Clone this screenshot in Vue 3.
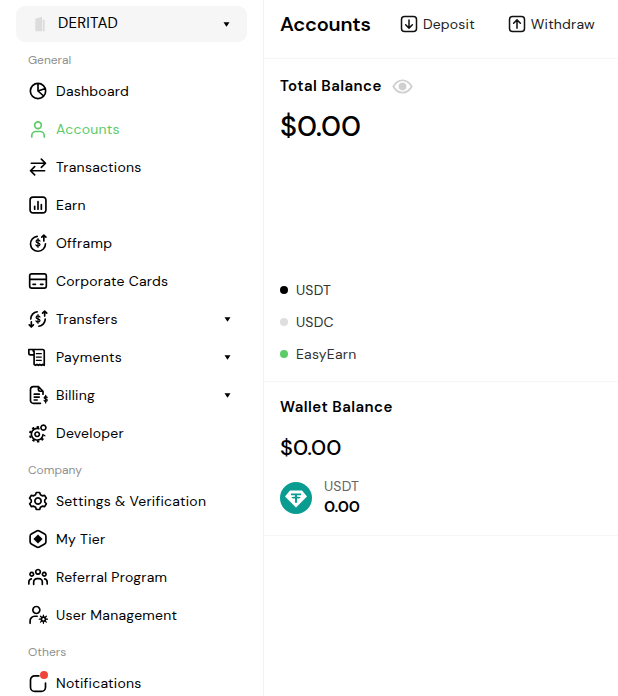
<script setup>
const down = { d: 'M4 6h16l-8 12z' }
const dollar = 'M14.300 9.700c-.4-.9-1.200-1.400-2.300-1.400-1.300 0-2.300.7-2.300 1.800 0 2.400 4.700 1.300 4.700 3.800 0 1.100-1 1.800-2.400 1.800-1.100 0-2-.5-2.400-1.400M12 6.800v10.400'
const general = [
  { label: 'Dashboard', icon: [{ d: 'M12 2.800a9.200 9.200 0 1 0 9.200 9.200A9.200 9.200 0 0 0 12 2.800zM12 2.800V12l6.800 6M12 12l8.800-3' }] },
  { label: 'Accounts', active: true, icon: [{ d: 'M12 3.500a4 4 0 1 0 0 8 4 4 0 0 0 0-8zM4.500 21.500v-1.500a5 5 0 0 1 5-5h5a5 5 0 0 1 5 5v1.500' }] },
  { label: 'Transactions', icon: [{ d: 'M21 7.500H4M16 2.500l5 5-5 5M3 16.500h17M8 11.500l-5 5 5 5' }] },
  { label: 'Earn', icon: [{ d: 'M6 2.500h12a3.500 3.500 0 0 1 3.500 3.500v12a3.500 3.500 0 0 1-3.500 3.500H6A3.500 3.500 0 0 1 2.500 18V6A3.500 3.500 0 0 1 6 2.500zM8 17v-3.500M12 17V8M16 17v-5.500' }] },
  { label: 'Offramp', icon: [{ d: 'M21 13a9 9 0 1 1-10-9M19 9.500V2.500M16.500 5L19 2.500 21.500 5' }, { d: dollar, thin: true }] },
  { label: 'Corporate Cards', icon: [{ d: 'M4.500 3.500h15A2.500 2.500 0 0 1 22 6v12a2.500 2.500 0 0 1-2.500 2.500h-15A2.500 2.500 0 0 1 2 18V6a2.500 2.500 0 0 1 2.500-2.500zM2 10h20M6 16h3M15 16h3' }] },
  { label: 'Transfers', caret: true, icon: [{ d: 'M11 3.300A8.800 8.800 0 0 0 3.300 12M13 20.700A8.800 8.800 0 0 0 20.700 12M20 8.500V2.500M17.500 5L20 2.500 22.500 5M4 15.500v6M1.500 19L4 21.500 6.500 19' }, { d: dollar, thin: true }] },
  { label: 'Payments', caret: true, icon: [{ d: 'M1 3h16.500a2 2 0 0 1 2 2v17l-1.800-1.200-1.700 1.200-1.800-1.200-1.700 1.200-1.700-1.200-1.800 1.200-1.700-1.200V5M1 3v4.500a2 2 0 0 0 2 2h3.500M6.500 5a2 2 0 0 0-2-2' }, { d: 'M10 8h6M10 12h6M10 16h6', thin: true }] },
  { label: 'Billing', caret: true, icon: [{ d: 'M18 11V7.500L12.500 2H6.500a3.500 3.500 0 0 0-3.500 3.500v13A3.500 3.500 0 0 0 6.500 22H15M12.500 2v3.500a2 2 0 0 0 2 2H18M7.500 11h6M7.500 14.500h6M7.500 18h3.500' }, { d: 'M23 15c-.3-.8-1-1.200-1.800-1.200-1 0-1.800.6-1.800 1.400 0 1.900 3.700 1 3.700 3 0 .9-.8 1.400-1.900 1.400-.8 0-1.500-.4-1.800-1.100M21.200 12.300v9.200', thin: true }] },
  { label: 'Developer', icon: [
    { d: 'M13 6.800a7 7 0 1 0 5 7.200' },
    { d: 'M13.200 5.100a8.700 8.700 0 1 0 6.500 9.200', teeth: true },
    { d: 'M11 10.800a2.700 2.700 0 1 0 .01 0zM18.500 2.500a3 3 0 1 0 .01 0z' },
  ] },
]
const company = [
  { label: 'Settings & Verification', icon: [{ d: 'M10 1.800h4l.9 2.700 2.300 1.300 2.800-.6 2 3.500-1.900 2.100v2.400l1.900 2.100-2 3.500-2.800-.6-2.300 1.300-.9 2.700h-4l-.9-2.700-2.300-1.300-2.800.6-2-3.500 1.900-2.100v-2.400L1.900 8.700l2-3.500 2.800.6L9 4.500zM12 8.300a3.700 3.700 0 1 0 .01 0z' }] },
  { label: 'My Tier', icon: [{ d: 'M10.500 2.300a3 3 0 0 1 3 0l6.500 3.800a3 3 0 0 1 1.500 2.600v6.600a3 3 0 0 1-1.500 2.600l-6.500 3.800a3 3 0 0 1-3 0L4 17.900a3 3 0 0 1-1.500-2.600V8.700A3 3 0 0 1 4 6.100z' }, { d: 'M12 6.500l5.500 5.500-5.500 5.500L6.500 12z', fill: true }] },
  { label: 'Referral Program', icon: [{ d: 'M12 3a2.800 2.800 0 1 0 .01 0zM4.500 6.500a2.200 2.200 0 1 0 .01 0zM19.500 6.500a2.200 2.200 0 1 0 .01 0zM6.800 21v-3a4 4 0 0 1 4-4h2.400a4 4 0 0 1 4 4v3M1 20.500v-2.500a4 4 0 0 1 3-3.800M23 20.500v-2.500a4 4 0 0 0-3-3.800' }] },
  { label: 'User Management', icon: [
    { d: 'M10 1.800a4.200 4.200 0 1 0 .01 0zM2.500 22v-3a5.500 5.500 0 0 1 5.500-5.500h3' },
    { d: 'M18.500 14.500a2.500 2.500 0 1 0 .01 0z' },
    { d: 'M18.500 12v2.500M18.500 19.500V22M13.500 17H16M21 17h2.500M15 13.500l1.800 1.800M20.200 18.700l1.800 1.800M15 20.500l1.800-1.800M20.200 15.300l1.800-1.800', thin: true },
  ] },
]
const legend = [
  { label: 'USDT', color: '#000000' },
  { label: 'USDC', color: '#dedede' },
  { label: 'EasyEarn', color: '#5ccb68' },
]
</script>

<template>
  <div class="app">
    <aside class="sidebar">
      <div class="org">
        <svg class="building" viewBox="0 0 24 24"><path d="M5 23V4l10-3v22zM16 5l3 1v17h-3z" /></svg>
        <span class="org-name">DERITAD</span>
        <svg class="caret org-caret" viewBox="0 0 24 24"><path :d="down.d" /></svg>
      </div>

      <div class="section">General</div>
      <div v-for="item in general" :key="item.label" class="item" :class="{ active: item.active }">
        <svg class="icon" viewBox="0 0 24 24">
          <path v-for="(p, i) in item.icon" :key="i" :d="p.d" :class="{ solid: p.fill, thin: p.thin, teeth: p.teeth }" />
        </svg>
        <span class="label">{{ item.label }}</span>
        <svg v-if="item.caret" class="caret" viewBox="0 0 24 24"><path :d="down.d" /></svg>
      </div>

      <div class="section">Company</div>
      <div v-for="item in company" :key="item.label" class="item">
        <svg class="icon" viewBox="0 0 24 24">
          <path v-for="(p, i) in item.icon" :key="i" :d="p.d" :class="{ solid: p.fill, thin: p.thin, teeth: p.teeth }" />
        </svg>
        <span class="label">{{ item.label }}</span>
      </div>

      <div class="section">Others</div>
      <div class="item">
        <span class="bell">
          <svg class="icon" viewBox="0 0 24 24"><path d="M13 3.500H8a5 5 0 0 0-5 5V17a5 5 0 0 0 5 5h8a5 5 0 0 0 5-5v-5" /></svg>
          <i class="badge"></i>
        </span>
        <span class="label">Notifications</span>
      </div>
    </aside>

    <main class="main">
      <header class="topbar">
        <h1>Accounts</h1>
        <div class="actions">
          <button class="action">
            <svg viewBox="0 0 24 24"><path d="M6 2h12a4 4 0 0 1 4 4v12a4 4 0 0 1-4 4H6a4 4 0 0 1-4-4V6a4 4 0 0 1 4-4zM12 6.500v11M7.500 13l4.500 4.500 4.500-4.500" /></svg>
            <span>Deposit</span>
          </button>
          <button class="action">
            <svg viewBox="0 0 24 24"><path d="M6 2h12a4 4 0 0 1 4 4v12a4 4 0 0 1-4 4H6a4 4 0 0 1-4-4V6a4 4 0 0 1 4-4zM12 17.500v-11M7.500 11L12 6.500l4.500 4.500" /></svg>
            <span>Withdraw</span>
          </button>
        </div>
      </header>

      <section class="total">
        <div class="total-head">
          <h2>Total Balance</h2>
          <svg class="eye" viewBox="0 0 24 24">
            <path d="M1.500 12C4 7.500 7.500 5 12 5s8 2.500 10.500 7c-2.500 4.500-6 7-10.500 7s-8-2.500-10.500-7z" />
            <circle cx="12" cy="12" r="5" />
          </svg>
        </div>
        <div class="big">$0.00</div>
        <ul class="legend">
          <li v-for="row in legend" :key="row.label">
            <i class="dot" :style="{ background: row.color }"></i>
            <span>{{ row.label }}</span>
          </li>
        </ul>
      </section>

      <section class="wallet">
        <h2>Wallet Balance</h2>
        <div class="medium">$0.00</div>
        <div class="asset">
          <svg class="tether" viewBox="0 0 32 32">
            <circle cx="16" cy="16" r="16" fill="#0b9c91" />
            <path d="M10 8.500h12l5 6L16 25.500 5 14.500z" fill="#fff" />
            <path d="M11 11.500h10v1.800h-4v1.500c2 .1 3.500.4 3.500.9s-1.500.8-3.500.9v4.200h-2v-4.200c-2-.1-3.500-.4-3.500-.9s1.500-.8 3.500-.9v-1.500h-4z" fill="#0b9c91" />
          </svg>
          <div class="asset-text">
            <span class="asset-name">USDT</span>
            <span class="asset-value">0.00</span>
          </div>
        </div>
      </section>
    </main>
  </div>
</template>

<style scoped>
.app {
  display: flex;
  width: 618px;
  height: 696px;
  overflow: hidden;
  background: #fff;
  color: #000;
  font-family: "DM Sans", Inter, "Noto Sans", sans-serif;
}
.sidebar {
  flex: 0 0 264px;
  box-sizing: border-box;
  height: 696px;
  padding: 6px 16px 0;
  border-right: 1px solid #f2f2f2;
  overflow: hidden;
}
.org {
  display: flex;
  align-items: center;
  width: 231px;
  height: 36px;
  padding: 0 16px;
  box-sizing: border-box;
  border-radius: 9px;
  background: #f6f6f6;
}
.building {
  width: 16px;
  height: 16px;
  fill: #dcdcdc;
}
.org-name {
  margin: -2px 0 0 10px;
  font-size: 15px;
  letter-spacing: 0.2px;
}
.org-caret {
  margin-left: auto;
}
.caret {
  flex: 0 0 auto;
  width: 9px;
  height: 9px;
  fill: #000;
}
.section {
  box-sizing: border-box;
  height: 30px;
  padding: 9px 12px 0;
  font-size: 12px;
  line-height: 18px;
  color: #8f8f8f;
}
.item {
  display: flex;
  align-items: center;
  height: 38px;
  padding: 0 15px 0 12px;
  font-size: 14px;
  letter-spacing: 0.25px;
}
.item .caret {
  margin-left: auto;
}
.item.active {
  color: #5ccb68;
}
.icon {
  flex: 0 0 20px;
  width: 20px;
  height: 20px;
  fill: none;
  stroke: currentColor;
  stroke-width: 2;
  stroke-linecap: round;
  stroke-linejoin: round;
}
.solid {
  fill: currentColor;
  stroke: none;
}
.thin {
  stroke-width: 1.500;
}
.teeth {
  stroke-width: 2.400;
  stroke-linecap: butt;
  stroke-dasharray: 2.800 3;
}
.label {
  margin-left: 8px;
}
.bell {
  position: relative;
  display: flex;
}
.badge {
  position: absolute;
  top: -2px;
  right: 0;
  width: 8px;
  height: 8px;
  border-radius: 50%;
  background: #f04438;
}
.main {
  flex: 1;
  min-width: 0;
}
.topbar {
  display: flex;
  align-items: flex-start;
  box-sizing: border-box;
  height: 59px;
  padding: 11px 23px 0 16px;
  border-bottom: 1px solid #f6f6f6;
}
h1 {
  margin: 0;
  font-size: 20px;
  line-height: 26px;
  font-weight: 600;
  letter-spacing: -0.2px;
}
.actions {
  display: flex;
  gap: 33px;
  margin-left: auto;
}
.action {
  display: flex;
  align-items: center;
  gap: 5px;
  height: 26px;
  padding: 0;
  border: 0;
  background: none;
  color: #222;
  font: inherit;
  font-size: 14px;
  letter-spacing: 0.2px;
}
.action svg {
  width: 18px;
  height: 18px;
  fill: none;
  stroke: #111;
  stroke-width: 2;
  stroke-linecap: round;
  stroke-linejoin: round;
}
.total {
  box-sizing: border-box;
  height: 323px;
  padding: 17px 16px 0;
  border-bottom: 1px solid #f6f6f6;
}
.total-head {
  display: flex;
  align-items: center;
  gap: 10px;
  height: 20px;
}
h2 {
  margin: 0;
  font-size: 15px;
  line-height: 20px;
  font-weight: 600;
  letter-spacing: 0.45px;
}
.eye {
  width: 21px;
  height: 21px;
  fill: none;
  stroke: #cfcfcf;
  stroke-width: 2;
}
.eye circle {
  fill: #cfcfcf;
  stroke: #fff;
  stroke-width: 1;
}
.big {
  margin-top: 10px;
  font-size: 29px;
  line-height: 40px;
  font-weight: 500;
}
.legend {
  margin: 128px 0 0;
  padding: 0;
  list-style: none;
}
.legend li {
  display: flex;
  align-items: center;
  gap: 8px;
  height: 32px;
  font-size: 14px;
  letter-spacing: 0.2px;
  color: #333;
}
.dot {
  width: 8px;
  height: 8px;
  border-radius: 50%;
}
.wallet {
  box-sizing: border-box;
  height: 154px;
  padding: 15px 16px 0;
  border-bottom: 1px solid #f6f6f6;
}
.medium {
  margin-top: 15px;
  font-size: 22px;
  line-height: 32px;
  font-weight: 500;
}
.asset {
  display: flex;
  align-items: center;
  gap: 12px;
  margin-top: 13px;
}
.tether {
  width: 32px;
  height: 32px;
}
.asset-text {
  display: flex;
  flex-direction: column;
}
.asset-name {
  font-size: 14px;
  line-height: 19px;
  letter-spacing: 0.2px;
  color: #666;
}
.asset-value {
  font-size: 16px;
  line-height: 22px;
  font-weight: 600;
}
</style>
